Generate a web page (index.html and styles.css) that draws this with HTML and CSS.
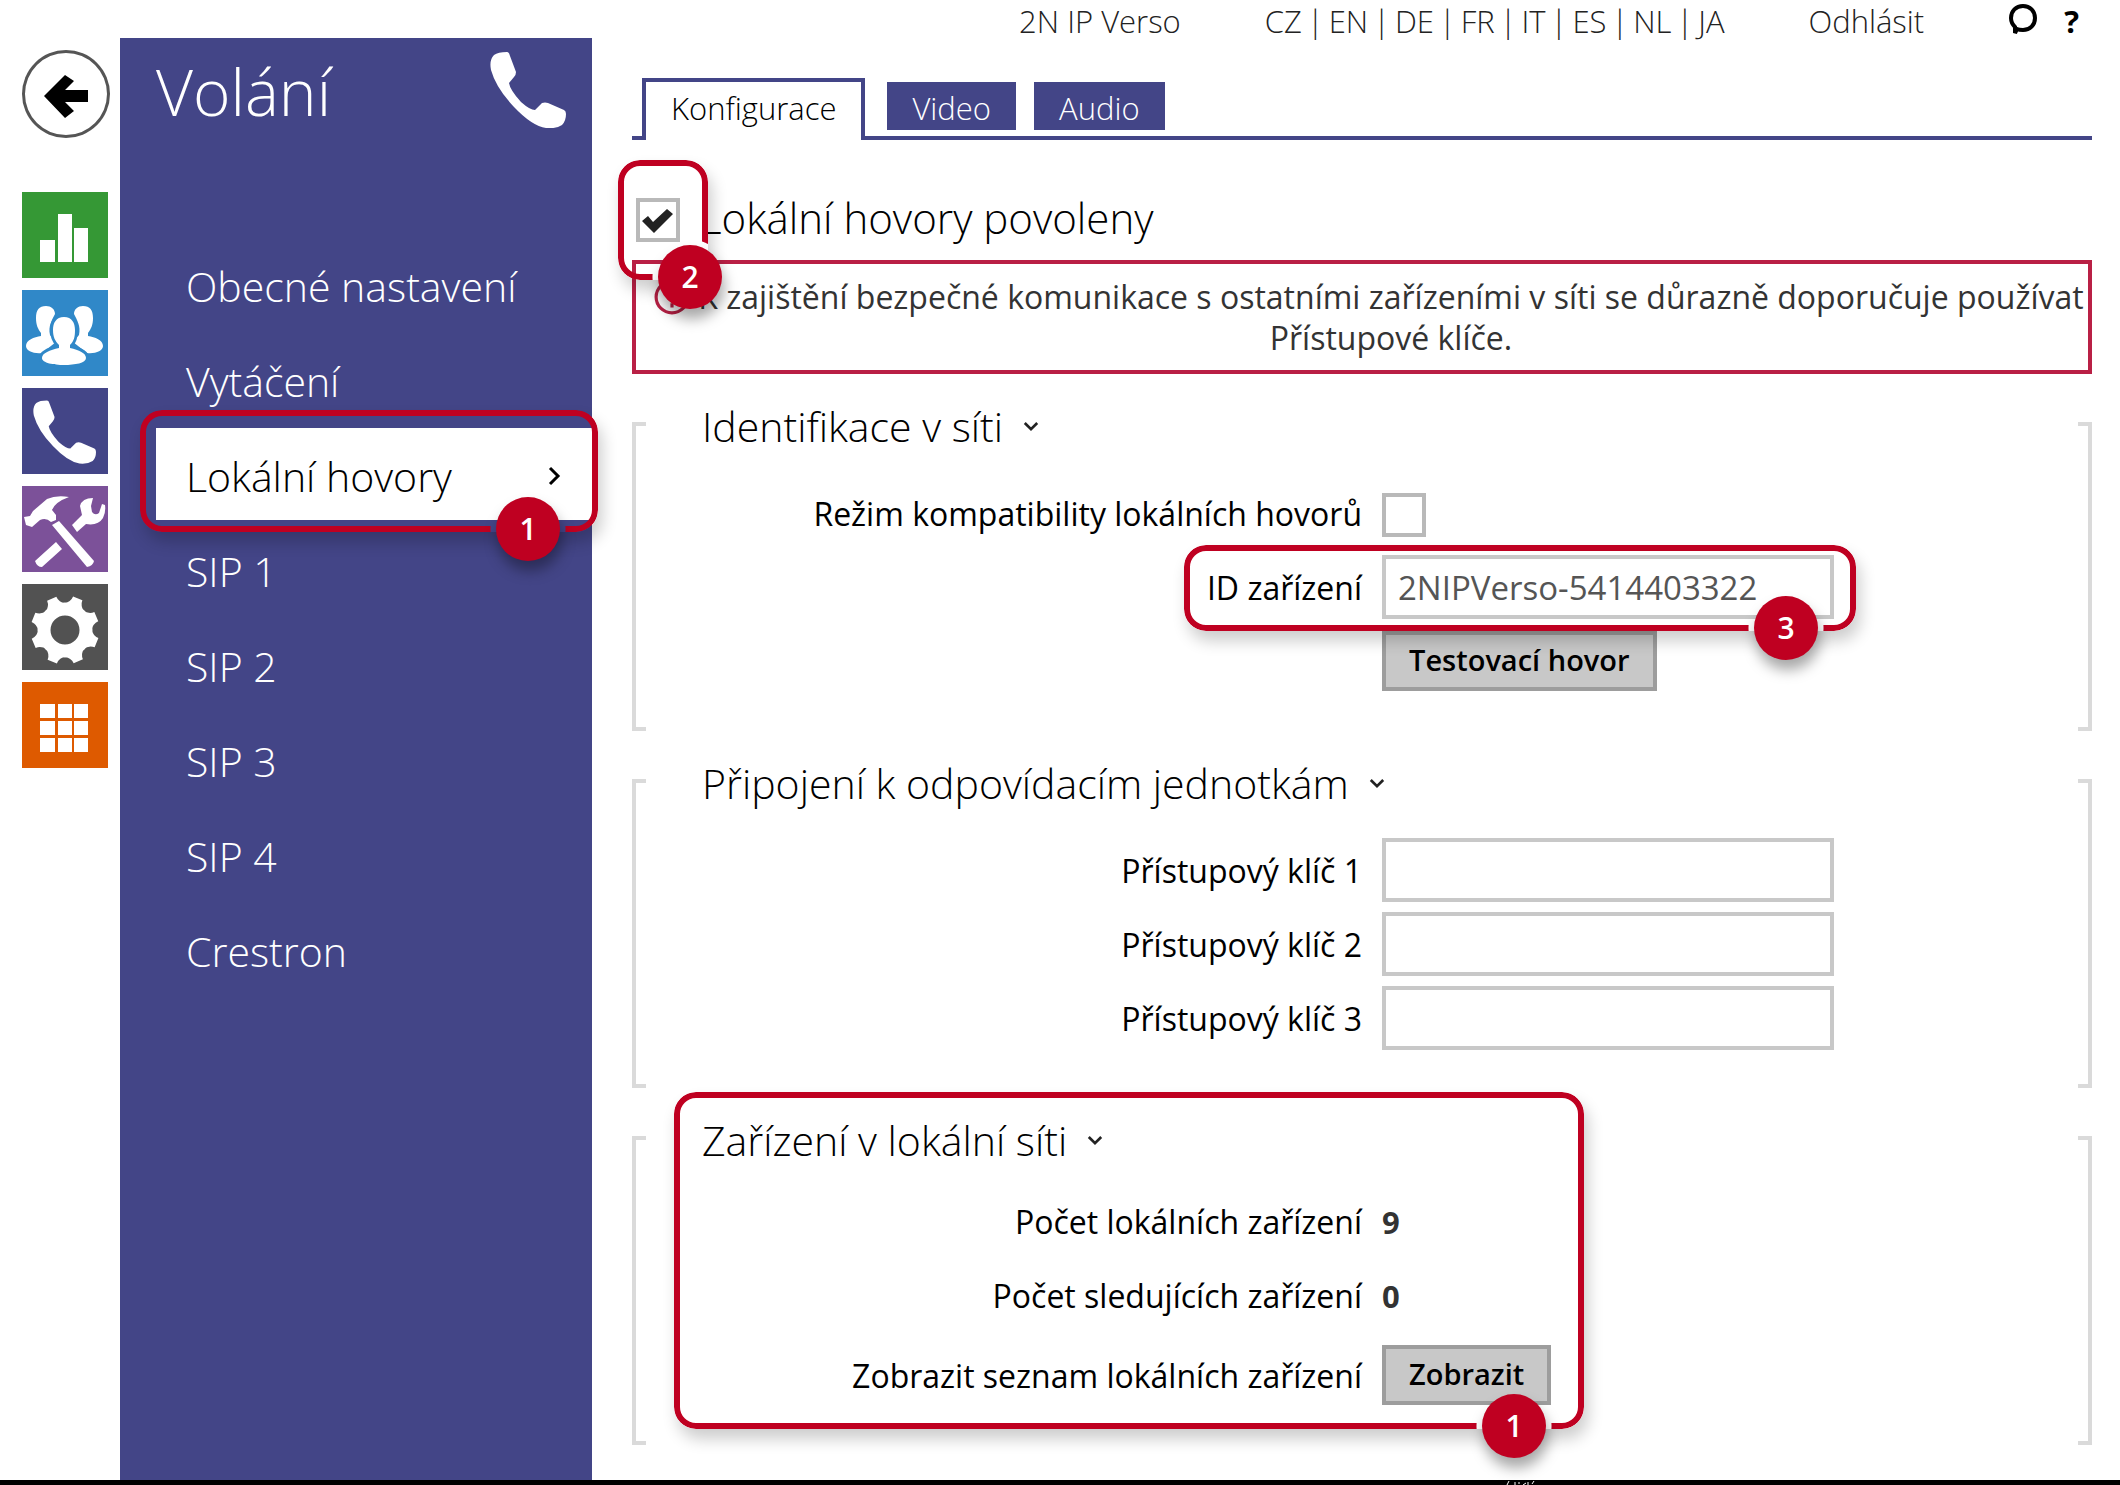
FILE: index.html
```html
<!DOCTYPE html>
<html lang="cs">
<head>
<meta charset="utf-8">
<meta name="viewport" content="width=device-width, initial-scale=1">
<title>2N IP Verso – Volání</title>
<link rel="stylesheet" href="styles.css">
</head>
<body>
<svg class="defs" aria-hidden="true">
  <symbol id="phone" viewBox="0 0 76 76"><path d="M4 3Q8 0 17 0Q19 0 20 4L26 20Q26 23 24 25L19 31Q20 38 31 50Q40 58 45 58L52 51Q55 50 58 51L74 58Q76 59 76 62Q76 69 72 73Q66 77 56 76Q42 74 24 55Q6 36 1 18Q-1 8 4 3Z"/></symbol>
  <symbol id="chevron-down" viewBox="0 0 18 12"><path d="M2 2L9 9L16 2" fill="none" stroke="#222" stroke-width="3"/></symbol>
</svg>
<header class="topbar">
  <span>2N IP Verso</span>
  <nav class="languages" aria-label="Jazyk"><a href="#cz">CZ</a><span>|</span><a href="#en">EN</a><span>|</span><a href="#de">DE</a><span>|</span><a href="#fr">FR</a><span>|</span><a href="#it">IT</a><span>|</span><a href="#es">ES</a><span>|</span><a href="#nl">NL</a><span>|</span><a href="#ja">JA</a></nav>
  <a href="#logout">Odhlásit</a>
  <div class="help">
    <a class="help-link" href="#feedback" aria-label="Zpětná vazba"><svg width="30" height="32" viewBox="0 0 30 32"><path d="M7 23C4 20 3 17 3 14C3 7 8 2 15 2C22 2 27 7 27 14C27 21 22 26 15 26C13 26 11 26 9 25L7 29Z" fill="none" stroke="#000" stroke-width="4"/></svg></a>
    <a class="help-link help-mark" href="#help">?</a>
  </div>
</header>
<div class="layout">
  <nav class="rail" aria-label="Hlavní menu">
    <a class="back" href="#back" aria-label="Zpět"><svg viewBox="0 0 88 88"><path d="M22 46L43 25L52 31L43 40H66V52H43L52 61L43 68Z"/></svg></a>
    <a class="tile tile-status" href="#status" aria-label="Stav"><svg viewBox="0 0 86 86"><path d="M18 48H33V70H18ZM36 22H50V70H36ZM52 36H66V70H52Z"/></svg></a>
    <a class="tile tile-users" href="#users" aria-label="Adresář"><svg viewBox="0 0 86 86">
      <path d="M24 16C17 16 14 20 14 28C14 35 16 39 19 43L19 46C12 47 4 50 4 56C4 61 12 64 20 63L34 52L28 45C26 36 30 30 33 24C33 19 29 16 24 16Z"/>
      <path d="M61 16C68 16 71 20 71 28C71 35 69 39 66 43L66 46C73 47 81 50 81 56C81 61 73 64 65 63L51 52L57 45C59 36 55 30 52 24C52 19 56 16 61 16Z"/>
      <path class="person-front" d="M42 27C34 27 31 33 31 40C31 47 33 51 37 55L37 58C28 60 20 63 20 68C20 73 32 75 42 75C53 75 64 73 64 68C64 63 57 60 48 58L48 55C52 51 53 47 53 40C53 33 50 27 42 27Z"/></svg></a>
    <a class="tile tile-calling" href="#calling" aria-label="Volání"><svg viewBox="0 0 86 86"><use href="#phone" x="11" y="12" width="63" height="64"/></svg></a>
    <a class="tile tile-services" href="#services" aria-label="Služby"><svg viewBox="0 0 86 86"><path d="M47 11Q34 9 25 13L11 25L8 30L2 31L4 39L10 41L18 34Q24 31 29 36L34 34V29L30 24Q33 16 47 11ZM30 39L37 35L72 75Q71 80 65 81ZM34 56L40 63L20 81Q15 81 13 75ZM71 12Q60 12 58 20L60 29L50 39L55 46L64 38Q76 40 81 32Q84 26 83 19L80 18L77 27Q73 30 70 26L69 20Z"/></svg></a>
    <a class="tile tile-system" href="#system" aria-label="Systém"><svg viewBox="0 0 86 86"><g transform="translate(43 46)"><circle class="gear-ring" r="21"/>
      <path id="tooth" transform="rotate(22)" d="M-11 -24Q-5 -28 -5 -34H5Q5 -28 11 -24Z"/>
      <use href="#tooth" transform="rotate(45)"/><use href="#tooth" transform="rotate(90)"/><use href="#tooth" transform="rotate(135)"/><use href="#tooth" transform="rotate(180)"/><use href="#tooth" transform="rotate(225)"/><use href="#tooth" transform="rotate(270)"/><use href="#tooth" transform="rotate(315)"/></g></svg></a>
    <a class="tile tile-apps" href="#apps" aria-label="Aplikace"><svg viewBox="0 0 86 86"><path d="M18 22H33V36H18ZM36 22H50V36H36ZM52 22H66V36H52ZM18 39H33V53H18ZM36 39H50V53H36ZM52 39H66V53H52ZM18 56H33V70H18ZM36 56H50V70H36ZM52 56H66V70H52Z"/></svg></a>
  </nav>
  <aside class="sidebar">
    <div class="sidebar-head">
      <h1>Volání</h1>
      <svg class="sidebar-icon" aria-hidden="true"><use href="#phone"/></svg>
    </div>
    <ul class="menu">
      <li><a href="#general">Obecné nastavení</a></li>
      <li><a href="#dialing">Vytáčení</a></li>
      <li class="active"><a href="#local" aria-current="page">Lokální hovory<svg width="14" height="20" viewBox="0 0 14 20"><path d="M2 2L10 10L2 18" fill="none" stroke="#000" stroke-width="3"/></svg></a>
        <div class="callout callout-menu"><i class="ring"></i><b class="badge">1</b></div></li>
      <li><a href="#sip1">SIP 1</a></li>
      <li><a href="#sip2">SIP 2</a></li>
      <li><a href="#sip3">SIP 3</a></li>
      <li><a href="#sip4">SIP 4</a></li>
      <li><a href="#crestron">Crestron</a></li>
    </ul>
  </aside>
  <main class="main">
    <nav class="tabs" aria-label="Záložky">
      <a class="tab tab-active" href="#config" aria-current="page">Konfigurace</a>
      <a class="tab" href="#video">Video</a>
      <a class="tab" href="#audio">Audio</a>
    </nav>
    <div class="enable">
      <div class="enable-box">
        <input type="checkbox" class="check" id="enabled" checked>
        <div class="callout callout-enable"><i class="ring"></i><b class="badge">2</b></div>
      </div>
      <label for="enabled">Lokální hovory povoleny</label>
    </div>
    <div class="notice">
      <svg class="notice-icon" viewBox="0 0 34 34" aria-hidden="true"><circle cx="17" cy="17" r="15"/><path d="M17 8V19M17 23V27"/></svg>
      <p>K zajištění bezpečné komunikace s ostatními zařízeními v síti se důrazně doporučuje používat Přístupové klíče.</p>
    </div>
    <section class="group">
      <h2>Identifikace v síti<svg class="fold"><use href="#chevron-down"/></svg></h2>
      <div class="rows">
        <div class="row"><label for="compat">Režim kompatibility lokálních hovorů</label><input type="checkbox" class="check" id="compat"></div>
        <div class="row"><label for="device-id">ID zařízení</label>
          <div class="field"><input type="text" class="text" id="device-id" value="2NIPVerso-5414403322">
          <div class="callout callout-id"><i class="ring"></i><b class="badge">3</b></div></div></div>
        <div class="row"><span></span><button type="button" class="button">Testovací hovor</button></div>
      </div>
    </section>
    <section class="group">
      <h2>Připojení k odpovídacím jednotkám<svg class="fold"><use href="#chevron-down"/></svg></h2>
      <div class="rows">
        <div class="row"><label for="key1">Přístupový klíč 1</label><input type="text" class="text" id="key1"></div>
        <div class="row"><label for="key2">Přístupový klíč 2</label><input type="text" class="text" id="key2"></div>
        <div class="row"><label for="key3">Přístupový klíč 3</label><input type="text" class="text" id="key3"></div>
      </div>
    </section>
    <section class="group">
      <h2>Zařízení v lokální síti<svg class="fold"><use href="#chevron-down"/></svg></h2>
      <div class="rows">
        <div class="row"><span class="name">Počet lokálních zařízení</span><strong>9</strong></div>
        <div class="row"><span class="name">Počet sledujících zařízení</span><strong>0</strong></div>
        <div class="row"><label for="show">Zobrazit seznam lokálních zařízení</label><button type="button" class="button" id="show">Zobrazit</button></div>
      </div>
      <div class="callout callout-devices"><i class="ring"></i><b class="badge">1</b></div>
    </section>
  </main>
</div>
<footer class="bottom"><svg width="30" height="4" viewBox="0 0 30 4" aria-hidden="true"><path d="M2 4L4 0M10 4V1M14 3V1M18 4L21 2M23 4V1M27 3L29 0" stroke="#fff" fill="none"/></svg></footer>
</body>
</html>
```
FILE: styles.css
```css
*, *::before, *::after { box-sizing: border-box; }
body {
  margin: 0;
  min-height: 100vh;
  display: flex;
  flex-direction: column;
  background: #fff;
  color: #000;
  font-family: "Open Sans", "Noto Sans", sans-serif;
  font-size: 32px;
  line-height: 40px;
}
a { color: inherit; text-decoration: none; }
.defs { position: absolute; width: 0; height: 0; }

.topbar {
  display: flex;
  justify-content: flex-end;
  gap: 84px;
  height: 38px;
  padding: 1px 41px 0 0;
  font-size: 31px;
  font-weight: 300;
  color: #222;
}
.languages { display: flex; gap: 5px; }
.help { display: flex; gap: 26px; }
.help-link { display: block; padding-top: 3px; }
.help-mark { padding-top: 0; font-weight: 700; color: #000; }

.layout { flex: 1; display: flex; }

.rail {
  flex: none;
  width: 120px;
  padding: 12px 0 0 22px;
  display: flex;
  flex-direction: column;
  gap: 12px;
}
.back {
  width: 88px;
  height: 88px;
  margin-bottom: 42px;
  border-radius: 50%;
  box-shadow: inset 0 0 0 3px #555;
}
.tile { width: 86px; height: 86px; fill: #fff; }
.tile svg, .back svg { display: block; width: 100%; height: 100%; }
.tile-status { background: #359835; }
.tile-users { background: #3088c8; }
.tile-calling { background: #434587; }
.tile-services { background: #7c5199; }
.tile-system { background: #525252; }
.tile-apps { background: #de5a00; }
.person-front { stroke: #3088c8; stroke-width: 6px; paint-order: stroke; }
.gear-ring { fill: none; stroke: #fff; stroke-width: 13px; }

.sidebar {
  flex: none;
  width: 472px;
  padding-left: 36px;
  background: #434587;
  color: #fff;
  font-weight: 300;
}
.sidebar-head {
  display: flex;
  justify-content: space-between;
  height: 200px;
  padding: 14px 26px 0 0;
}
h1 { margin: 0; font-size: 64px; line-height: 80px; font-weight: 300; }
.sidebar-icon { width: 76px; height: 76px; fill: #fff; }
.menu {
  margin: 0;
  padding: 0;
  list-style: none;
  display: flex;
  flex-direction: column;
  gap: 3px;
  font-size: 41px;
}
.menu li { position: relative; }
.menu a {
  display: flex;
  align-items: center;
  justify-content: space-between;
  height: 92px;
  padding: 4px 30px 0;
}
.active a { background: #fff; color: #000; }

.main {
  flex: 1;
  min-width: 0;
  padding: 40px 28px 32px 40px;
}
.tabs {
  display: flex;
  align-items: flex-end;
  gap: 18px;
  padding-left: 10px;
  border-bottom: 4px solid #434587;
}
.tab {
  height: 48px;
  margin-bottom: 6px;
  padding: 6px 25px;
  background: #434587;
  color: #fff;
  font-size: 31px;
  font-weight: 300;
}
.tab-active {
  height: 62px;
  margin: 0 4px -4px 0;
  border: 4px solid #434587;
  border-bottom: 0;
  background: #fff;
  color: #000;
}
.enable {
  display: flex;
  align-items: center;
  gap: 20px;
  margin: 58px 0 18px;
  padding-left: 4px;
  font-size: 42px;
  font-weight: 300;
}
.enable-box { position: relative; height: 44px; }
.enable label { margin-top: -4px; }
.check {
  appearance: none;
  display: block;
  width: 44px;
  height: 44px;
  margin: 0;
  border: 4px solid #b9b9b9;
  background: #fff;
}
.row .check { margin-top: 4px; }
.check:checked {
  background: #fff url("data:image/svg+xml,%3Csvg xmlns='http://www.w3.org/2000/svg' viewBox='0 0 36 36'%3E%3Cpath d='M2 19L8 14L13 20L27 7L33 12L14 31Z' fill='%23222'/%3E%3C/svg%3E") center / 100% no-repeat;
}
.notice {
  display: flex;
  gap: 8px;
  padding: 12px 4px 12px 18px;
  border: 4px solid #b92045;
  color: #333;
  line-height: 41px;
}
.notice-icon {
  flex: none;
  width: 36px;
  height: 42px;
  fill: none;
  stroke: #b92045;
  stroke-width: 3px;
}
.notice p { flex: 1; margin: 0; text-align: center; }

.group {
  display: flow-root;
  position: relative;
  margin-top: 48px;
  padding-bottom: 38px;
}
.group::before, .group::after {
  content: "";
  position: absolute;
  top: 0;
  bottom: 0;
  width: 14px;
  border: 4px solid #dadada;
}
.group::before { left: 0; border-right: 0; }
.group::after { right: 0; border-left: 0; }
h2 {
  display: flex;
  align-items: center;
  gap: 20px;
  margin: -21px 0 30px;
  padding-left: 70px;
  font-size: 41px;
  line-height: 50px;
  font-weight: 300;
}
.fold { width: 16px; height: 11px; }
.rows { display: grid; gap: 10px; }
.row {
  display: grid;
  grid-template-columns: 50% 1fr;
  align-items: center;
  justify-items: start;
  column-gap: 20px;
  min-height: 64px;
}
.row label, .name { justify-self: end; }
.row label { padding-top: 2px; }
.name, .row strong { padding-bottom: 10px; }
.row strong { font-size: 31px; color: #333; }
.field { position: relative; }
.text {
  display: block;
  width: 452px;
  height: 64px;
  padding: 0 12px;
  border: 4px solid #c8c8c8;
  background: #fff;
  color: #555;
  font: 400 33px "Open Sans", "Noto Sans", sans-serif;
}
.button {
  height: 60px;
  padding: 0 23px 4px;
  border: 4px solid #9d9d9d;
  background: #c8c8c8;
  color: #000;
  font: 600 29px "Open Sans", "Noto Sans", sans-serif;
}

/* Numbered callouts: a ring with a hole cut out around its badge */
.callout {
  --x: 50%;
  --y: calc(100% - 3px);
  position: absolute;
  z-index: 2;
  border-radius: 22px;
  box-shadow: 4px 10px 16px rgba(0, 0, 0, .2);
  pointer-events: none;
}
.ring {
  position: absolute;
  inset: 0;
  border: 6px solid #bf0021;
  border-radius: 22px;
  -webkit-mask: radial-gradient(circle at var(--x) var(--y), transparent 37px, #000 38px);
  mask: radial-gradient(circle at var(--x) var(--y), transparent 37px, #000 38px);
}
.badge {
  position: absolute;
  left: var(--x);
  top: var(--y);
  width: 64px;
  height: 64px;
  margin: -32px 0 0 -32px;
  border-radius: 50%;
  background: #bf0021;
  box-shadow: 2px 10px 14px rgba(0, 0, 0, .35);
  color: #fff;
  font-size: 30px;
  font-weight: 600;
  line-height: 64px;
  text-align: center;
}
.callout-menu { inset: -18px -6px -12px -16px; --x: calc(100% - 70px); }
.callout-enable { inset: -38px -28px -38px -18px; --x: calc(100% - 18px); }
.callout-id { inset: -10px -22px -12px -198px; --x: calc(100% - 70px); }
.callout-devices { inset: -44px auto 16px 42px; width: 910px; --x: calc(100% - 70px); }

.bottom {
  display: flex;
  height: 5px;
  padding: 1px 0 0 71%;
  background: #000;
}
```
